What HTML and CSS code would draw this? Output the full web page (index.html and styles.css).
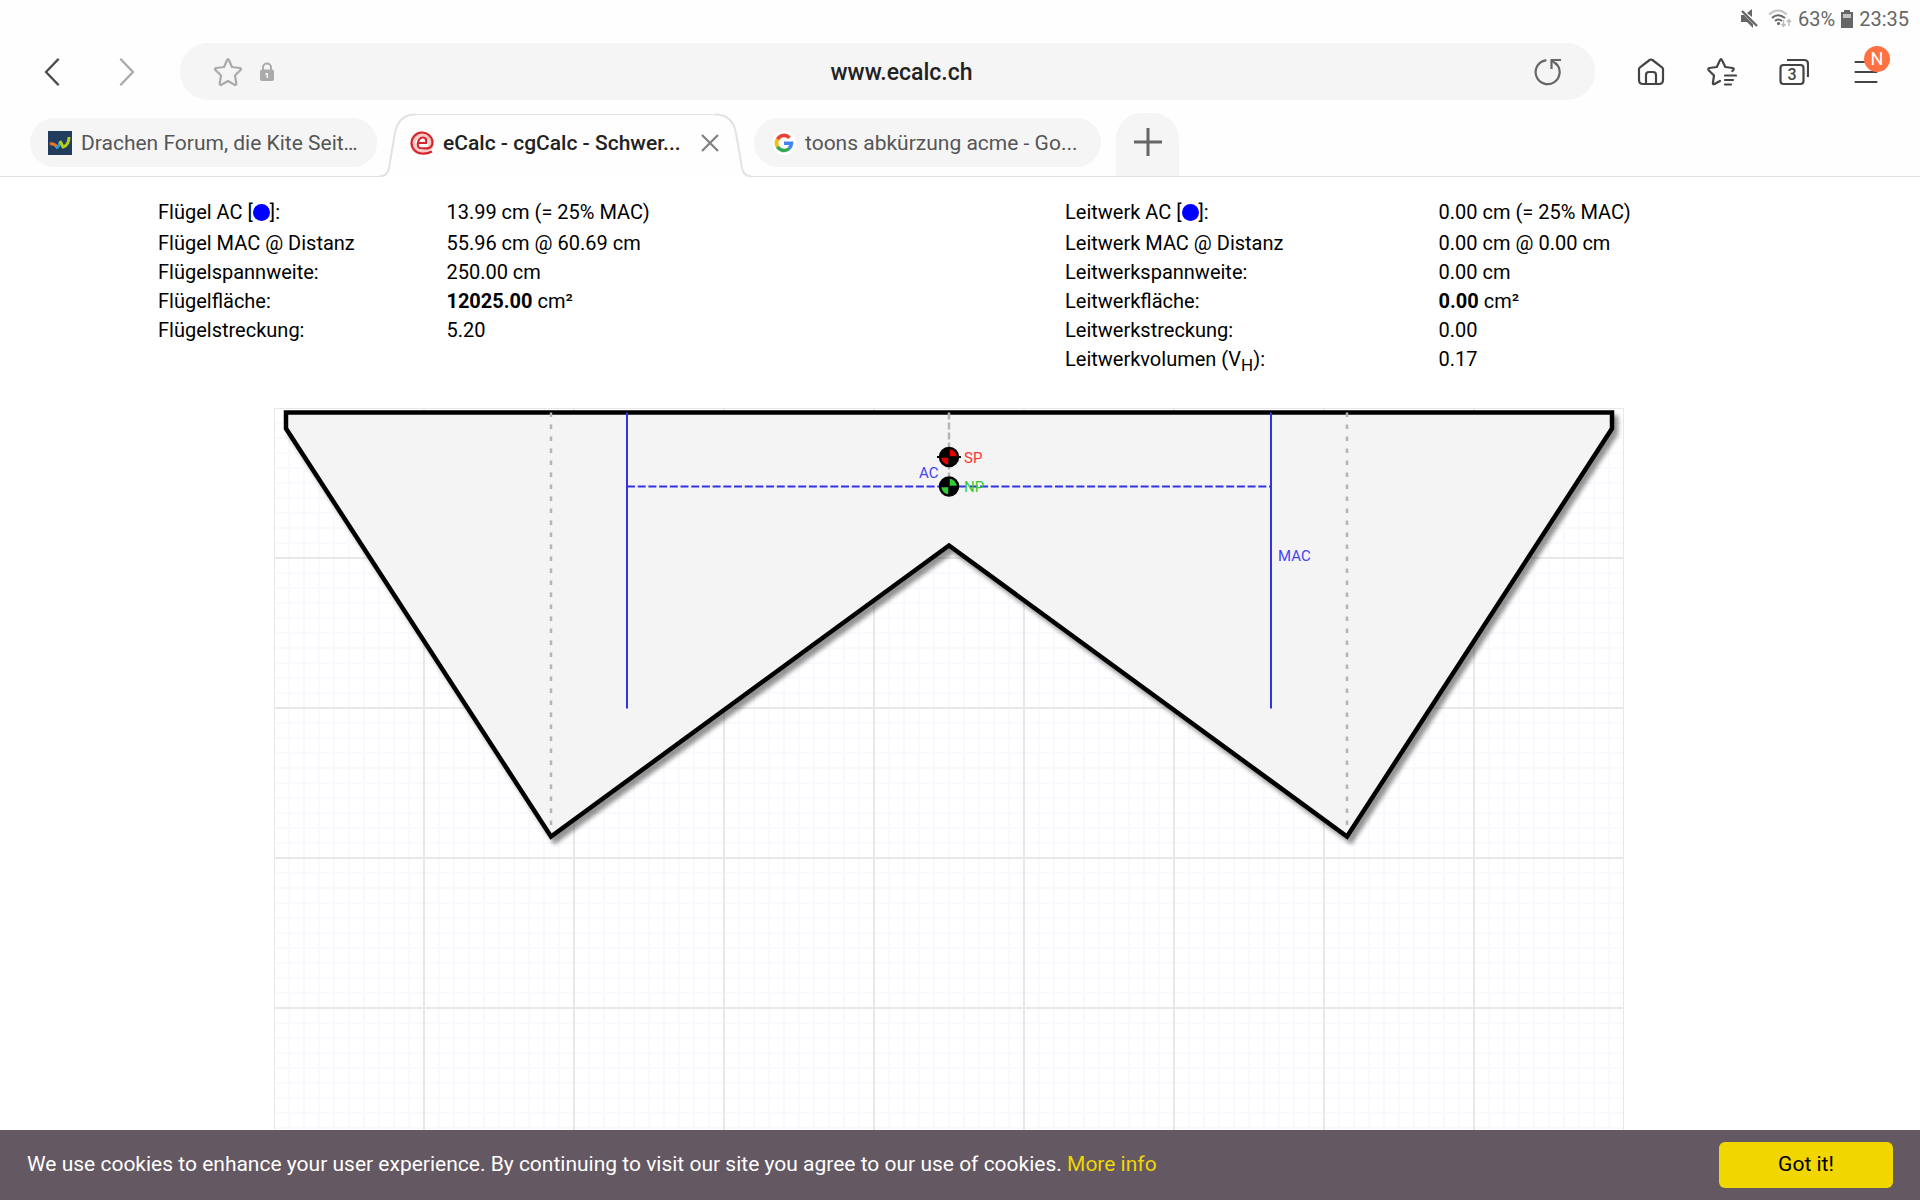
FILE: index.html
```html
<!DOCTYPE html>
<html lang="de">
<head>
<meta charset="utf-8">
<title>eCalc - cgCalc - Schwerpunkt</title>
<link rel="stylesheet" href="styles.css">
</head>
<body>
<header class="chrome">
  <div class="status">
    <svg class="ic-mute" width="18" height="20" viewBox="0 0 18 20" aria-hidden="true"><path d="M1 6h3l9 9v4L7 13H1zM7 4l5-4v8z" fill="#666"/><path d="M2 2l15 15" stroke="#666" stroke-width="2.4"/></svg>
    <svg class="ic-wifi" width="24" height="20" viewBox="0 0 24 20" fill="none" aria-hidden="true"><path d="M1 5.500Q10-2.500 19 5.500" stroke="#c4c4c4" stroke-width="2"/><path d="M4 9Q10 3.500 17 9M7 12Q10 9 14 12" stroke="#666" stroke-width="2"/><circle cx="10.500" cy="14.500" r="1.600" fill="#666"/><path d="M15.500 11v6M13.500 15l2 2.500 2-2.500M21 17v-6M19 13l2-2.500 2 2.500" stroke="#bbb" stroke-width="1.400"/></svg>
    <span>63%</span>
    <svg class="ic-batt" width="12" height="20" viewBox="0 0 12 20" aria-hidden="true"><path d="M3 1h6v2h3v16H0V3h3z" fill="#666"/><path d="M2 5h8v4H2z" fill="#c4c4c4"/></svg>
    <time>23:35</time>
  </div>
  <div class="toolbar">
    <button class="icon-btn back" aria-label="Zurück"><svg width="16" height="28" viewBox="0 0 16 28" fill="none" stroke="#4a4a4a" stroke-width="2.400" stroke-linecap="round" stroke-linejoin="round"><path d="M14 1.500L2 14l12 12.500"/></svg></button>
    <button class="icon-btn forward" aria-label="Vor"><svg width="16" height="28" viewBox="0 0 16 28" fill="none" stroke="#aaa" stroke-width="2.400" stroke-linecap="round" stroke-linejoin="round"><path d="M2 1.500L14 14 2 26.500"/></svg></button>
    <div class="address">
      <button class="icon-btn" aria-label="Lesezeichen"><svg width="28" height="28" viewBox="0 0 28 28" fill="none" stroke="#aaa" stroke-width="2.200" stroke-linejoin="round"><path d="M13 2.200Q14 .2 15 2.200L18 9l8 1q2 .5.500 2L21 17.500l1.300 8q0 2-1.800 1.200L14 23l-6.500 3.700q-1.800.8-1.800-1.200L7 17.500 1.500 12Q0 10.500 2 10l8-1z"/></svg></button>
      <svg width="14" height="20" viewBox="0 0 14 20" aria-hidden="true"><path d="M3 9V5.500a4 4 0 0 1 8 0V9" fill="none" stroke="#aaa" stroke-width="2"/><rect y="7.500" width="14" height="11.500" rx="2" fill="#aaa"/><path d="M5.500 11H8v5H6.500v-3h-1z" fill="#f5f5f5"/></svg>
      <input class="url" type="text" value="www.ecalc.ch" aria-label="Adresse">
      <button class="icon-btn" aria-label="Neu laden"><svg width="28" height="28" viewBox="0 0 28 28" fill="none" stroke="#666" stroke-width="2.200"><path d="M11.500 2.300A12 12 0 1 0 22 5.500" stroke-linecap="round"/><path d="M17.500 11V2H27M18 2.500l5 4.500"/></svg></button>
    </div>
    <button class="icon-btn" aria-label="Startseite"><svg width="28" height="28" viewBox="0 0 28 28" fill="none" stroke="#444" stroke-width="2.200" stroke-linejoin="round"><path d="M2 11Q2 10 3 9.300L12.600 2q1.400-1 2.800 0L25 9.300q1 .7 1 1.700v11q0 4-4 4H6q-4 0-4-4z"/><path d="M9 26v-9q0-3 3-3h4q3 0 3 3v9"/></svg></button>
    <button class="icon-btn" aria-label="Lesezeichenliste"><svg width="30" height="28" viewBox="0 0 30 28" fill="none" stroke="#444" stroke-width="2.200" stroke-linejoin="round" stroke-linecap="round"><path d="M13 23l-5.500 3q-1.800.8-1.600-1.200L7 17.500 1.700 12.200Q.5 10.500 2.500 10l7.300-1L13 2.200q1-2 2 0L18.300 9l7.200 1q2 .5.800 2l-1 1M18 17.500h11M18 22h8M18 26.500h6"/></svg></button>
    <button class="icon-btn" aria-label="3 Tabs"><svg width="30" height="28" viewBox="0 0 30 28" fill="none" stroke="#444" stroke-width="2.200"><rect x="1.500" y="7" width="23" height="19" rx="3"/><path d="M8 2h17q4 0 4 4v13"/><text class="tab-count" x="13" y="22" text-anchor="middle">3</text></svg></button>
    <button class="icon-btn menu" aria-label="Menü"><svg width="24" height="28" viewBox="0 0 24 28" fill="none" stroke="#444" stroke-width="2.200" stroke-linecap="round"><path d="M1.500 4h21M1.500 14h21M1.500 24h21"/></svg><span class="badge">N</span></button>
  </div>
  <nav class="tabs">
    <a class="tab" href="#drachen">
      <svg width="24" height="24" viewBox="0 0 24 24" aria-hidden="true"><path fill="#213c5c" d="M0 0h24v24H0z"/><path d="M2 13q4-1 7 3" stroke="#e87722" stroke-width="3" fill="none"/><path d="M8 17q3-1 4-6" stroke="#2b9bd8" stroke-width="3" fill="none"/><path d="M12 10q1 2 3 6 6-2 6-10" stroke="#b5cf1c" stroke-width="3" fill="none"/></svg>
      <span>Drachen Forum, die Kite Seit…</span>
    </a>
    <div class="tab-active">
      <svg class="edge" width="36" height="64" viewBox="0 0 36 64" aria-hidden="true"><path d="M0 63h1c4 0 7-3 8-8L15 20C17 8 24 1.500 36 1.500" fill="none" stroke="#e2e2e2" stroke-width="2"/></svg>
      <a class="active-link" href="#ecalc" aria-current="page">
        <svg width="24" height="24" viewBox="0 0 24 24" fill="none" aria-hidden="true"><circle cx="12" cy="12" r="9" stroke="#f7c9c9" stroke-width="5"/><path d="M22 20.500Q17 23 12 22.500A10.500 10.500 0 1 1 22.500 11q0 6-5 6.300Q14 17.500 9.500 17 7 16 8 11.500 9 6.500 13 6.500q4 0 3 5.500H9" stroke="#d3262c" stroke-width="2.200"/></svg>
        <span>eCalc - cgCalc - Schwer...</span>
      </a>
      <button class="icon-btn" aria-label="Tab schließen"><svg width="18" height="18" viewBox="0 0 18 18" stroke="#808080" stroke-width="2.200"><path d="M1 1l16 16M17 1L1 17"/></svg></button>
      <svg class="edge" width="36" height="64" viewBox="0 0 36 64" aria-hidden="true"><path d="M36 63h-1c-4 0-7-3-8-8L21 20C19 8 12 1.500 0 1.500" fill="none" stroke="#e2e2e2" stroke-width="2"/></svg>
    </div>
    <a class="tab" href="#google">
      <svg width="24" height="24" viewBox="0 0 24 24" aria-hidden="true"><circle cx="12" cy="12" r="12" fill="#fff"/><g fill="none" stroke-width="3.600"><path d="M17.500 6.700A7.500 7.500 0 0 0 5.500 8.300" stroke="#ea4335"/><path d="M5.500 8.300a7.500 7.500 0 0 0 0 7.400" stroke="#fbbc05"/><path d="M5.500 15.700a7.500 7.500 0 0 0 11.600 1.800" stroke="#34a853"/><path d="M17.100 17.500a7.500 7.500 0 0 0 2.400-5.200H12" stroke="#4285f4"/></g></svg>
      <span>toons abkürzung acme - Go...</span>
    </a>
    <button class="new-tab" aria-label="Neuer Tab"><svg width="28" height="28" viewBox="0 0 28 28" stroke="#666" stroke-width="3"><path d="M14 0v28M0 14h28"/></svg></button>
  </nav>
</header>

<main class="page">
  <section class="data">
    <table>
      <tr class="first"><th scope="row">Flügel AC [<i class="dot"></i>]:</th><td>13.99 cm (= 25% MAC)</td></tr>
      <tr><th scope="row">Flügel MAC @ Distanz</th><td>55.96 cm @ 60.69 cm</td></tr>
      <tr><th scope="row">Flügelspannweite:</th><td>250.00 cm</td></tr>
      <tr><th scope="row">Flügelfläche:</th><td><b>12025.00</b> cm²</td></tr>
      <tr><th scope="row">Flügelstreckung:</th><td>5.20</td></tr>
    </table>
    <table class="tail">
      <tr class="first"><th scope="row">Leitwerk AC [<i class="dot"></i>]:</th><td>0.00 cm (= 25% MAC)</td></tr>
      <tr><th scope="row">Leitwerk MAC @ Distanz</th><td>0.00 cm @ 0.00 cm</td></tr>
      <tr><th scope="row">Leitwerkspannweite:</th><td>0.00 cm</td></tr>
      <tr><th scope="row">Leitwerkfläche:</th><td><b>0.00</b> cm²</td></tr>
      <tr><th scope="row">Leitwerkstreckung:</th><td>0.00</td></tr>
      <tr><th scope="row">Leitwerkvolumen (V<sub>H</sub>):</th><td>0.17</td></tr>
    </table>
  </section>
  <section class="plot">
    <svg class="wing" viewBox="0 0 1350 900" role="img" aria-label="Flügelgrundriss">
      <defs>
        <pattern id="fine" width="15" height="15" patternUnits="userSpaceOnUse"><path d="M0 0H15M0 0V15M0 15H15M15 0V15" stroke="#f9f9fe" stroke-width="2"/></pattern>
        <pattern id="coarse" width="150" height="150" patternUnits="userSpaceOnUse"><path d="M0 0H150M0 0V150M0 150H150M150 0V150" stroke="#e8e8e8" stroke-width="2"/></pattern>
        <filter id="shadow" x="-5%" y="-5%" width="110%" height="110%"><feDropShadow dx="4" dy="5" stdDeviation="2" flood-color="#000" flood-opacity=".42"/></filter>
      </defs>
      <rect width="1350" height="900" fill="url(#fine)"/>
      <rect width="1350" height="900" fill="url(#coarse)"/>
      <path d="M12 4.500H1338V20.500L1073 428.500 675 137.500 277 428.500 12 20.500Z" fill="#f4f4f4" stroke="#000" stroke-width="4.500" filter="url(#shadow)"/>
      <g fill="none" stroke="#b4b4b4" stroke-width="2.500">
        <path d="M277 4.500V420M1073 4.500V420" stroke-dasharray="4.500 7.500"/>
        <path d="M675 4.500V78" stroke-dasharray="7 3"/>
      </g>
      <g fill="none" stroke="#3232e6">
        <path d="M353 4.500V300.500M997 4.500V300.500" stroke-width="2"/>
        <path d="M353 78.500H997" stroke-width="1.800" stroke-dasharray="8 2.700"/>
      </g>
      <g stroke="#000" stroke-width="1.500">
        <path d="M663 49h24" stroke-width="2"/>
        <circle cx="675" cy="49" r="9.500"/><path d="M675 49v-8.500a8.500 8.500 0 0 1 8.500 8.500zM675 49v8.500a8.500 8.500 0 0 1-8.500-8.500z" fill="#e80000"/>
        <circle cx="675" cy="78.500" r="9.500"/><path d="M675 78.500V70a8.500 8.500 0 0 1 8.500 8.500zM675 78.500V87a8.500 8.500 0 0 1-8.500-8.500z" fill="#32cd32"/>
      </g>
      <g class="marks">
        <text x="690" y="55" fill="#f33">SP</text>
        <text x="690" y="84" fill="#3c3">NP</text>
        <text x="645" y="70" fill="#44e">AC</text>
        <text x="1004" y="153" fill="#44e">MAC</text>
      </g>
    </svg>
  </section>
</main>

<footer class="cookies">
  <p>We use cookies to enhance your user experience. By continuing to visit our site you agree to our use of cookies. <a href="#info">More info</a></p>
  <button class="accept">Got it!</button>
</footer>
</body>
</html>
```
FILE: styles.css
```css
* { box-sizing: border-box; }
body {
  margin: 0;
  height: 100vh;
  display: flex;
  flex-direction: column;
  overflow: hidden;
  background: #fff;
  color: #000;
  font: 20px/28px Roboto, sans-serif;
}
button { font: inherit; border: 0; cursor: pointer; }
svg { display: block; flex: none; }
a { text-decoration: none; }

/* Browser chrome */
.chrome { flex: none; background: #fefefe; }
.status {
  display: flex;
  justify-content: flex-end;
  align-items: center;
  height: 38px;
  padding-right: 11px;
  gap: 6px;
  color: #666;
}
.ic-mute { margin-right: 4px; }
.toolbar {
  display: flex;
  align-items: center;
  gap: 42px;
  padding: 5px 42px 0 44px;
}
.back { margin-right: 17px; }
.forward { margin-right: 3px; }
.menu { margin-left: 3px; }
.icon-btn { display: block; padding: 0; background: none; position: relative; }
.address {
  flex: 1;
  display: flex;
  align-items: center;
  gap: 18px;
  height: 57px;
  padding: 0 33px 0 34px;
  border-radius: 28px;
  background: #f5f5f5;
}
.url {
  flex: 1;
  min-width: 0;
  padding: 2px 5px 0 0;
  border: 0;
  background: none;
  text-align: center;
  font: 500 23px/28px Roboto, sans-serif;
  color: #222;
}
.tab-count { font: 500 16px Roboto, sans-serif; fill: #444; stroke: none; }
.badge {
  position: absolute;
  top: -12px;
  right: -12px;
  width: 26px;
  height: 26px;
  border-radius: 50%;
  background: #ff7043;
  color: #fff;
  font-size: 18px;
  line-height: 26px;
  text-align: center;
}
.tabs {
  display: flex;
  margin-top: 13px;
  height: 64px;
  padding-left: 30px;
  background: linear-gradient(#e2e2e2, #e2e2e2) bottom / 100% 1px no-repeat;
}
.tab {
  display: flex;
  align-items: center;
  gap: 9px;
  width: 347px;
  height: 49px;
  margin-top: 5px;
  padding: 0 18px;
  border-radius: 25px;
  background: #f5f5f5;
  color: #555;
  font-size: 21px;
  white-space: nowrap;
}
.tab-active {
  display: flex;
  width: 371px;
  margin: 0 3px;
  background: linear-gradient(#e2e2e2, #e2e2e2) top 1px center / 300px 1px no-repeat, #fefefe;
}
.active-link {
  flex: 1;
  display: flex;
  align-items: center;
  gap: 9px;
  margin: 0 0 0 -6px;
  color: #222;
  font-weight: 500;
  font-size: 21px;
  height: 59px;
  white-space: nowrap;
}
.tab-active .icon-btn { height: 59px; margin-right: -4px; }
.new-tab {
  display: grid;
  place-items: center;
  width: 63px;
  height: 63px;
  margin-left: 15px;
  padding: 0 0 6px;
  border-radius: 26px 26px 0 0;
  background: #f5f5f5;
}

/* Page */
.page { flex: 1; min-height: 0; overflow: hidden; }
.data {
  display: grid;
  grid-template-columns: 907fr 697fr;
  align-items: start;
  padding: 19px 158px 0;
}
table { width: 100%; table-layout: fixed; border-collapse: collapse; }
tr { height: 29px; }
.first { height: 32px; }
th, td { padding: 0; font-weight: 400; text-align: left; white-space: nowrap; line-height: 28px; }
th { width: 31.8%; }
.tail th { width: 53.6%; }
b { font-weight: 700; }
sub { font-size: 17px; line-height: 0; }
.dot {
  display: inline-block;
  width: 17px;
  height: 17px;
  border-radius: 50%;
  background: #00f;
  vertical-align: -2px;
}
.plot {
  display: grid;
  grid-template-columns: 274fr 1350fr 296fr;
  padding-top: 35px;
}
.wing { grid-column: 2; width: 100%; }
.marks { font: 15px Roboto, sans-serif; }

/* Cookie bar */
.cookies {
  flex: none;
  display: flex;
  align-items: center;
  justify-content: space-between;
  height: 70px;
  padding: 0 27px;
  background: #645862;
  color: #fff;
  font-size: 21px;
}
.cookies p { margin: 0; padding-bottom: 2px; }
.cookies a { color: #f1d600; }
.accept {
  width: 174px;
  height: 46px;
  padding: 0 0 2px;
  border-radius: 6px;
  background: #f1d600;
  color: #000;
}
```
